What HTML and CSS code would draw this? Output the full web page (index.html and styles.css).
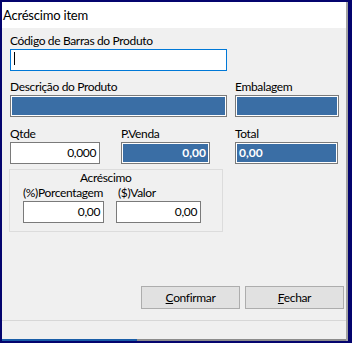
FILE: index.html
```html
<!DOCTYPE html>
<html lang="pt-BR">
  <head>
    <meta charset="UTF-8" />
    <title>Acréscimo item</title>
    <link rel="stylesheet" href="styles.css">
  </head>
  <body>
    <div class="window">
      <div class="titlebar">Acréscimo item</div>
      <div class="content">
        <div class="field">
          <p class="label">Código de Barras do Produto</p>
          <div class="box focus w-code"><span class="caret"></span></div>
        </div>

        <div class="row row-desc">
          <div class="field w-desc">
            <p class="label">Descrição do Produto</p>
            <div class="box blue"></div>
          </div>
          <div class="field w-emb">
            <p class="label">Embalagem</p>
            <div class="box blue"></div>
          </div>
        </div>

        <div class="row row-qty">
          <div class="field w-qty">
            <p class="label">Qtde</p>
            <div class="box right">0,000</div>
          </div>
          <div class="field w-price col-price">
            <p class="label">P.Venda</p>
            <div class="box blue right">0,00</div>
          </div>
          <div class="field w-total col-total">
            <p class="label">Total</p>
            <div class="box blue">0,00</div>
          </div>
        </div>

        <div class="group">
          <p class="group-title">Acréscimo</p>
          <div class="row group-row">
            <div class="field w-perc">
              <p class="label">(%)Porcentagem</p>
              <div class="box right">0,00</div>
            </div>
            <div class="field w-val">
              <p class="label label-val">($)Valor</p>
              <div class="box right">0,00</div>
            </div>
          </div>
        </div>

        <div class="actions">
          <button class="btn"><u>C</u>onfirmar</button>
          <button class="btn"><u>F</u>echar</button>
        </div>
      </div>
      <div class="footer"></div>
      <div class="progress"><div class="progress-fill"></div></div>
    </div>
  </body>
</html>
```

FILE: styles.css
```css
body {
  margin: 0;
  background-color: #04046e;
  font-family: Lato, "Noto Sans", sans-serif;
  font-size: 12px;
  letter-spacing: -0.35px;
  color: #000;
}

.window {
  margin: 2px 4px 2px 2px;
  width: 344px;
  border-right: 2px solid #a3a3a3;
  background-color: #f0f0f0;
}

.titlebar {
  height: 26px;
  line-height: 26px;
  padding-left: 1px;
  font-size: 13px;
  letter-spacing: -0.2px;
  background-color: #fff;
}

.content {
  height: 287px;
  padding: 5px 0 0 8px;
  border-bottom: 1px solid #d7d7d7;
}

.label {
  margin: 0 0 1px;
  height: 15px;
  line-height: 15px;
  white-space: nowrap;
}

.row {
  display: flex;
}

.field {
  flex: none;
}

.box {
  box-sizing: border-box;
  height: 22px;
  line-height: 20px;
  border: 1px solid #7a7a7a;
  background-color: #fff;
  padding: 0 3px;
  white-space: nowrap;
}

.box.right {
  text-align: right;
}

.box.focus {
  margin-top: 1px;
  border-color: #0078d7;
  padding: 2px 2px 0;
}

.caret {
  display: block;
  margin-left: 1px;
  width: 1px;
  height: 13px;
  background-color: #000;
}

.box.blue {
  background-color: #3a6ea5;
  box-shadow: inset 0 0 0 1px #fff;
  color: #fff;
  font-weight: bold;
  letter-spacing: 0;
  padding: 0 3px;
}

.w-code { width: 217px; }
.w-desc { width: 217px; }
.w-emb { width: 104px; }
.w-qty { width: 90px; }
.w-price { width: 89px; }
.w-total { width: 103px; }
.w-perc { width: 81px; }
.w-val { width: 85px; }

.row-desc {
  margin-top: 8px;
  gap: 8px;
}

.row-qty {
  margin-top: 9px;
}

.col-price {
  margin-left: 21px;
}

.col-total {
  margin-left: 25px;
}

.group {
  margin: 5px 0 0 -1px;
  width: 199px;
  height: 61px;
  border: 1px solid #dcdcdc;
  padding-left: 13px;
}

.group-title {
  margin: 1px 0 0;
  padding-left: 57px;
  height: 14px;
  line-height: 14px;
}

.group-row {
  gap: 12px;
}

.label-val {
  padding-left: 2px;
}

.actions {
  display: flex;
  gap: 5px;
  margin: 54px 0 0 131px;
}

.btn {
  width: 99px;
  height: 23px;
  padding: 0;
  border: 1px solid #adadad;
  background-color: #e1e1e1;
  font-family: inherit;
  font-size: 12px;
  letter-spacing: inherit;
  color: #000;
}

.footer {
  height: 18px;
}

.progress {
  height: 2px;
  background-color: #8c8c8c;
}

.progress-fill {
  width: 135px;
  height: 2px;
  background-color: #1a5ea8;
}
```
